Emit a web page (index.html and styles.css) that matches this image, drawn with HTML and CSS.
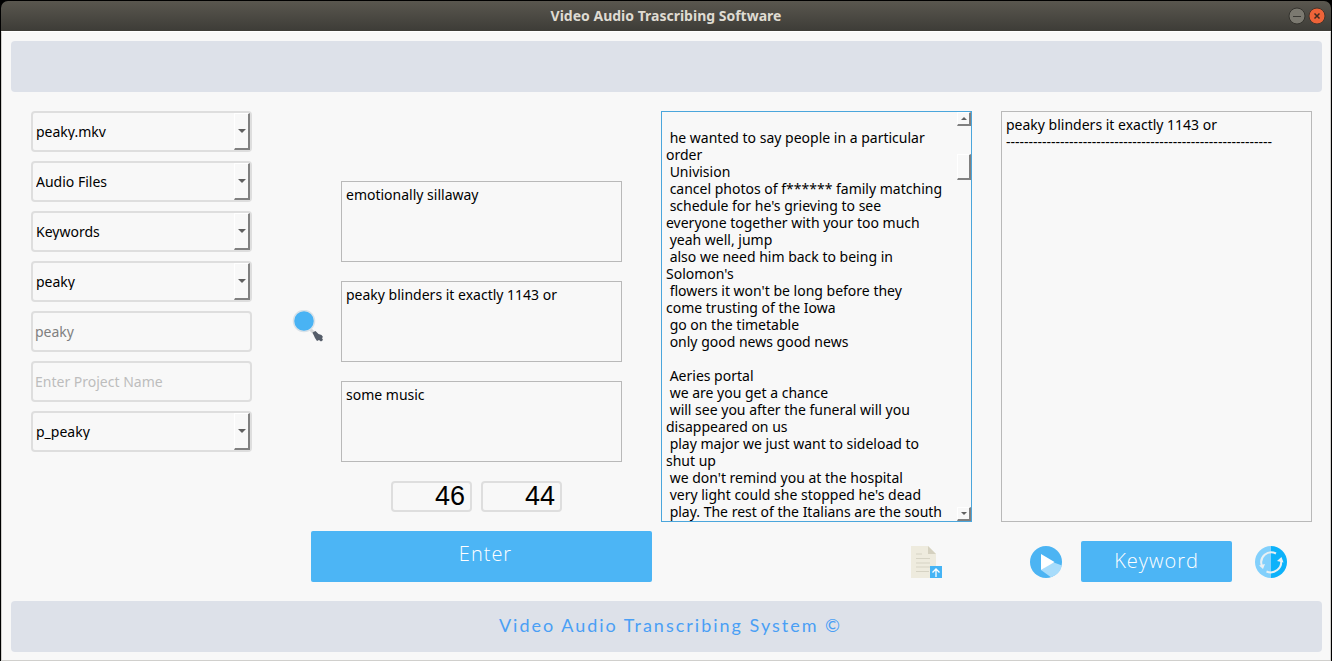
FILE: index.html
```html
<!DOCTYPE html>
<html lang="en">
<head>
<meta charset="utf-8">
<title>Video Audio Trascribing Software</title>
<link rel="stylesheet" href="styles.css">
</head>
<body>
<div class="window">
  <header class="titlebar">
    <h1 class="title">Video Audio Trascribing Software</h1>
    <div class="window-buttons">
      <button class="window-button" type="button" aria-label="Minimize"><svg viewBox="0 0 18 18"><circle cx="9" cy="9" r="8" fill="#7b7970" stroke="#34332e"/><path d="M5 9.500h8" stroke="#3b3a35"/></svg></button>
      <button class="window-button" type="button" aria-label="Close"><svg viewBox="0 0 18 18"><circle cx="9" cy="9" r="8" fill="#ee6338" stroke="#45352c"/><path d="M6.500 6.500l5 5M11.500 6.500l-5 5" stroke="#3f2b20" stroke-width="1.500"/></svg></button>
    </div>
  </header>
  <div class="content">
    <div class="banner"></div>
    <main class="workspace">
      <form class="fields">
        <div class="combo"><select class="control" aria-label="Video file"><option>peaky.mkv</option></select><span class="combo-arrow"></span></div>
        <div class="combo"><select class="control" aria-label="Audio files"><option>Audio Files</option></select><span class="combo-arrow"></span></div>
        <div class="combo"><select class="control" aria-label="Keywords"><option>Keywords</option></select><span class="combo-arrow"></span></div>
        <div class="combo"><select class="control" aria-label="Selected keyword"><option>peaky</option></select><span class="combo-arrow"></span></div>
        <input class="control entry" type="text" value="peaky" aria-label="Keyword">
        <input class="control entry" type="text" placeholder="Enter Project Name" aria-label="Project name">
        <div class="combo"><select class="control" aria-label="Project"><option>p_peaky</option></select><span class="combo-arrow"></span></div>
      </form>
      <section class="editor">
        <div class="editor-body">
          <button class="icon-button search" type="button" aria-label="Search"><svg viewBox="0 0 32 32"><path d="M17 18l6 6" stroke="#d5d7d8" stroke-width="3"/><circle cx="12" cy="11" r="10.500" fill="#49b3f4" stroke="#d9e2e8" stroke-width="1.500"/><path d="M20.500 22.500l3-1.500 3 3 3 1 1.500 2-1 1 1 2-2 1.500-2-1.500-2 1-2-3z" fill="#555d69"/></svg></button>
          <div class="notes">
            <textarea class="text-box note" aria-label="Previous line">emotionally sillaway</textarea>
            <textarea class="text-box note" aria-label="Current line">peaky blinders it exactly 1143 or</textarea>
            <textarea class="text-box note" aria-label="Next line">some music</textarea>
            <div class="counters"><output class="counter">46</output><output class="counter">44</output></div>
          </div>
        </div>
        <button class="action enter" type="button">Enter</button>
      </section>
      <section class="panel">
        <div class="transcript">
          <textarea class="text-box transcript-text" aria-label="Transcript">

 he wanted to say people in a particular
order
 Univision
 cancel photos of f****** family matching
 schedule for he's grieving to see
everyone together with your too much
 yeah well, jump
 also we need him back to being in
Solomon's
 flowers it won't be long before they
come trusting of the Iowa
 go on the timetable
 only good news good news

 Aeries portal
 we are you get a chance
 will see you after the funeral will you
disappeared on us
 play major we just want to sideload to
shut up
 we don't remind you at the hospital
 very light could she stopped he's dead
 play. The rest of the Italians are the south</textarea>
          <div class="scrollbar">
            <button class="scroll-button up" type="button" aria-label="Scroll up"></button>
            <span class="scroll-thumb"></span>
            <button class="scroll-button down" type="button" aria-label="Scroll down"></button>
          </div>
        </div>
        <div class="toolbar export">
          <button class="icon-button" type="button" aria-label="Export transcript"><svg viewBox="0 0 32 32"><path d="M1 0h17l8 8v24H1z" fill="#eeebde"/><path d="M18 0l8 8h-8z" fill="#d5d1c0"/><path d="M6 8h6M6 12.500h14M6 17h14M6 21h14M6 25.500h13" stroke="#d6d3c4"/><path d="M20 20h12v12H20z" fill="#45b4f5"/><path d="M26 31v-8M22.500 26.500l3.500-3.500 3.500 3.500" fill="none" stroke="#fff" stroke-width="1.300"/></svg></button>
        </div>
      </section>
      <section class="panel results">
        <textarea class="text-box results-text" aria-label="Keyword results">peaky blinders it exactly 1143 or
-----------------------------------------------------------</textarea>
        <div class="toolbar">
          <button class="icon-button" type="button" aria-label="Play"><svg viewBox="0 0 32 32"><circle cx="16" cy="16" r="16" fill="#4cb4f3"/><path d="M22.500 16L32 19.500A16 16 0 0 1 21 31.200L11 24z" fill="#a8dcfb"/><path d="M11 8l13.500 8L11 24z" fill="#fff"/></svg></button>
          <button class="action keyword" type="button">Keyword</button>
          <button class="icon-button" type="button" aria-label="Refresh"><svg viewBox="0 0 32 32"><path d="M16 0a16 16 0 0 0 0 32z" fill="#82d0fc"/><path d="M16 0a16 16 0 0 1 0 32z" fill="#0db2fa"/><path d="M21 7.500A10 10 0 0 0 7 20M11.500 25.500A10.500 10.500 0 0 0 26 14" fill="none" stroke="#e9f0f3" stroke-width="2"/><path d="M4 19.500l6-1.500-2 5zM22 15l4.500-4 2 5.500z" fill="#e9f0f3"/></svg></button>
        </div>
      </section>
    </main>
    <footer class="banner credit">Video Audio Transcribing System ©</footer>
  </div>
</div>
</body>
</html>
```
FILE: styles.css
```css
* { box-sizing: border-box; }
body {
  margin: 0;
  background: #000;
  color: #000;
  font: 14px/17px "Noto Sans", "Open Sans", sans-serif;
}
button, input, select, textarea { font: inherit; color: inherit; }
.window {
  display: flex;
  flex-direction: column;
  min-height: 100vh;
  padding: 1px;
}
.titlebar {
  display: grid;
  grid-template-columns: 1fr auto 1fr;
  align-items: center;
  height: 30px;
  padding: 0 5px;
  background: linear-gradient(#5a574f, #3d3c37);
  border-radius: 7px 7px 0 0;
}
.title {
  grid-column: 2;
  margin: 0;
  color: #dfdbd2;
  font: 700 14px/20px "Noto Sans", sans-serif;
}
.window-buttons {
  display: flex;
  gap: 2px;
  justify-self: end;
}
.window-button {
  width: 18px;
  height: 18px;
  padding: 0;
  border: 0;
  background: none;
}
svg { display: block; }
.content {
  display: flex;
  flex: 1;
  flex-direction: column;
  padding: 9px 8px 8px 9px;
  background: #f8f8f8;
  border: 1px solid #d0cfcc;
  border-top-color: #fff;
}
.banner {
  height: 51px;
  border-radius: 4px;
  background: #dde1e9;
}
.workspace {
  display: flex;
  flex: 1;
  padding: 19px 10px 19px 20px;
}
.fields {
  display: flex;
  flex: 221 1 0;
  flex-direction: column;
  gap: 9px;
  min-width: 0;
  margin-right: 39px;
}
.control {
  display: block;
  width: 100%;
  height: 41px;
  padding: 0 20px 0 3px;
  border: 2px solid #dedede;
  border-radius: 4px;
  background: #f8f8f8;
  appearance: none;
  font-size: 14px;
}
.entry {
  padding: 0 2px;
  color: #808080;
}
.entry::placeholder { color: #bdbdbd; }
.combo { position: relative; }
.combo-arrow {
  position: absolute;
  top: 2px;
  right: 2px;
  bottom: 2px;
  display: grid;
  place-items: center;
  width: 16px;
  border: solid #fff;
  border-width: 1px 2px 2px 1px;
  border-right-color: #808080;
  border-bottom-color: #808080;
  pointer-events: none;
}
.combo-arrow::after,
.scroll-button::after {
  content: "";
  border: solid transparent;
  border-width: 4px 4px 0;
  border-top-color: #606060;
}
.editor {
  display: flex;
  flex: 361 1 0;
  flex-direction: column;
  justify-content: flex-end;
  gap: 19px;
  min-width: 0;
  margin-right: 9px;
}
.editor-body { display: flex; }
.icon-button {
  flex: none;
  width: 32px;
  height: 32px;
  padding: 0;
  border: 0;
  background: none;
}
.search { margin: 129px 17px 0 1px; }
.notes {
  display: flex;
  flex: 1;
  flex-direction: column;
  gap: 19px;
  min-width: 0;
  margin-right: 30px;
}
.text-box {
  display: block;
  width: 100%;
  margin: 0;
  padding: 4px;
  border: 1px solid #b9b9b9;
  background: #f8f8f8;
  resize: none;
  overflow: hidden;
}
.note { height: 81px; }
.counters {
  display: flex;
  justify-content: center;
  gap: 9px;
  padding-right: 10px;
}
.counter {
  width: 81px;
  height: 31px;
  padding-right: 5px;
  border: 2px solid #dedede;
  border-radius: 4px;
  font: 27px/27px "Liberation Sans", sans-serif;
  text-align: right;
}
.action {
  border: 0;
  border-radius: 2px;
  background: #4cb5f5;
  color: #fff;
  font: 300 20px/24px "Open Sans", sans-serif;
  letter-spacing: 1px;
}
.enter {
  height: 51px;
  margin-left: 20px;
  padding: 0 0 5px 8px;
}
.panel {
  display: flex;
  flex: 311 1 0;
  flex-direction: column;
  gap: 19px;
  min-width: 0;
}
.results { margin-left: 29px; }
.transcript {
  position: relative;
  flex: 1;
}
.transcript-text {
  height: 100%;
  min-height: 411px;
  padding: 0 4px;
  border-color: #4ba6dc;
  white-space: pre;
}
.scrollbar {
  position: absolute;
  top: 1px;
  right: 1px;
  bottom: 1px;
  display: flex;
  flex-direction: column;
  width: 14px;
}
.scroll-button,
.scroll-thumb {
  display: grid;
  place-items: center;
  height: 14px;
  padding: 0;
  border: solid #fff;
  border-width: 1px 2px 2px 1px;
  border-right-color: #808080;
  border-bottom-color: #808080;
  background: #f8f8f8;
}
.scroll-button::after {
  border-width: 3px 3px 0;
}
.up::after {
  border-width: 0 3px 3px;
  border-bottom-color: #606060;
}
.scroll-thumb {
  height: 26px;
  margin-top: 28px;
}
.down { margin-top: auto; }
.results-text { flex: 1; }
.toolbar {
  display: flex;
  align-items: center;
  justify-content: space-between;
  height: 41px;
  padding: 0 25px 0 29px;
}
.export {
  justify-content: flex-end;
  padding-right: 30px;
}
.keyword {
  flex: 0 1 151px;
  height: 41px;
  margin-right: 4px;
  padding: 0 0 1px;
}
.credit {
  padding: 14px 0 0 8px;
  color: #4a9ff5;
  font: 18px/20px Lato, sans-serif;
  letter-spacing: 2px;
  text-align: center;
}
```
